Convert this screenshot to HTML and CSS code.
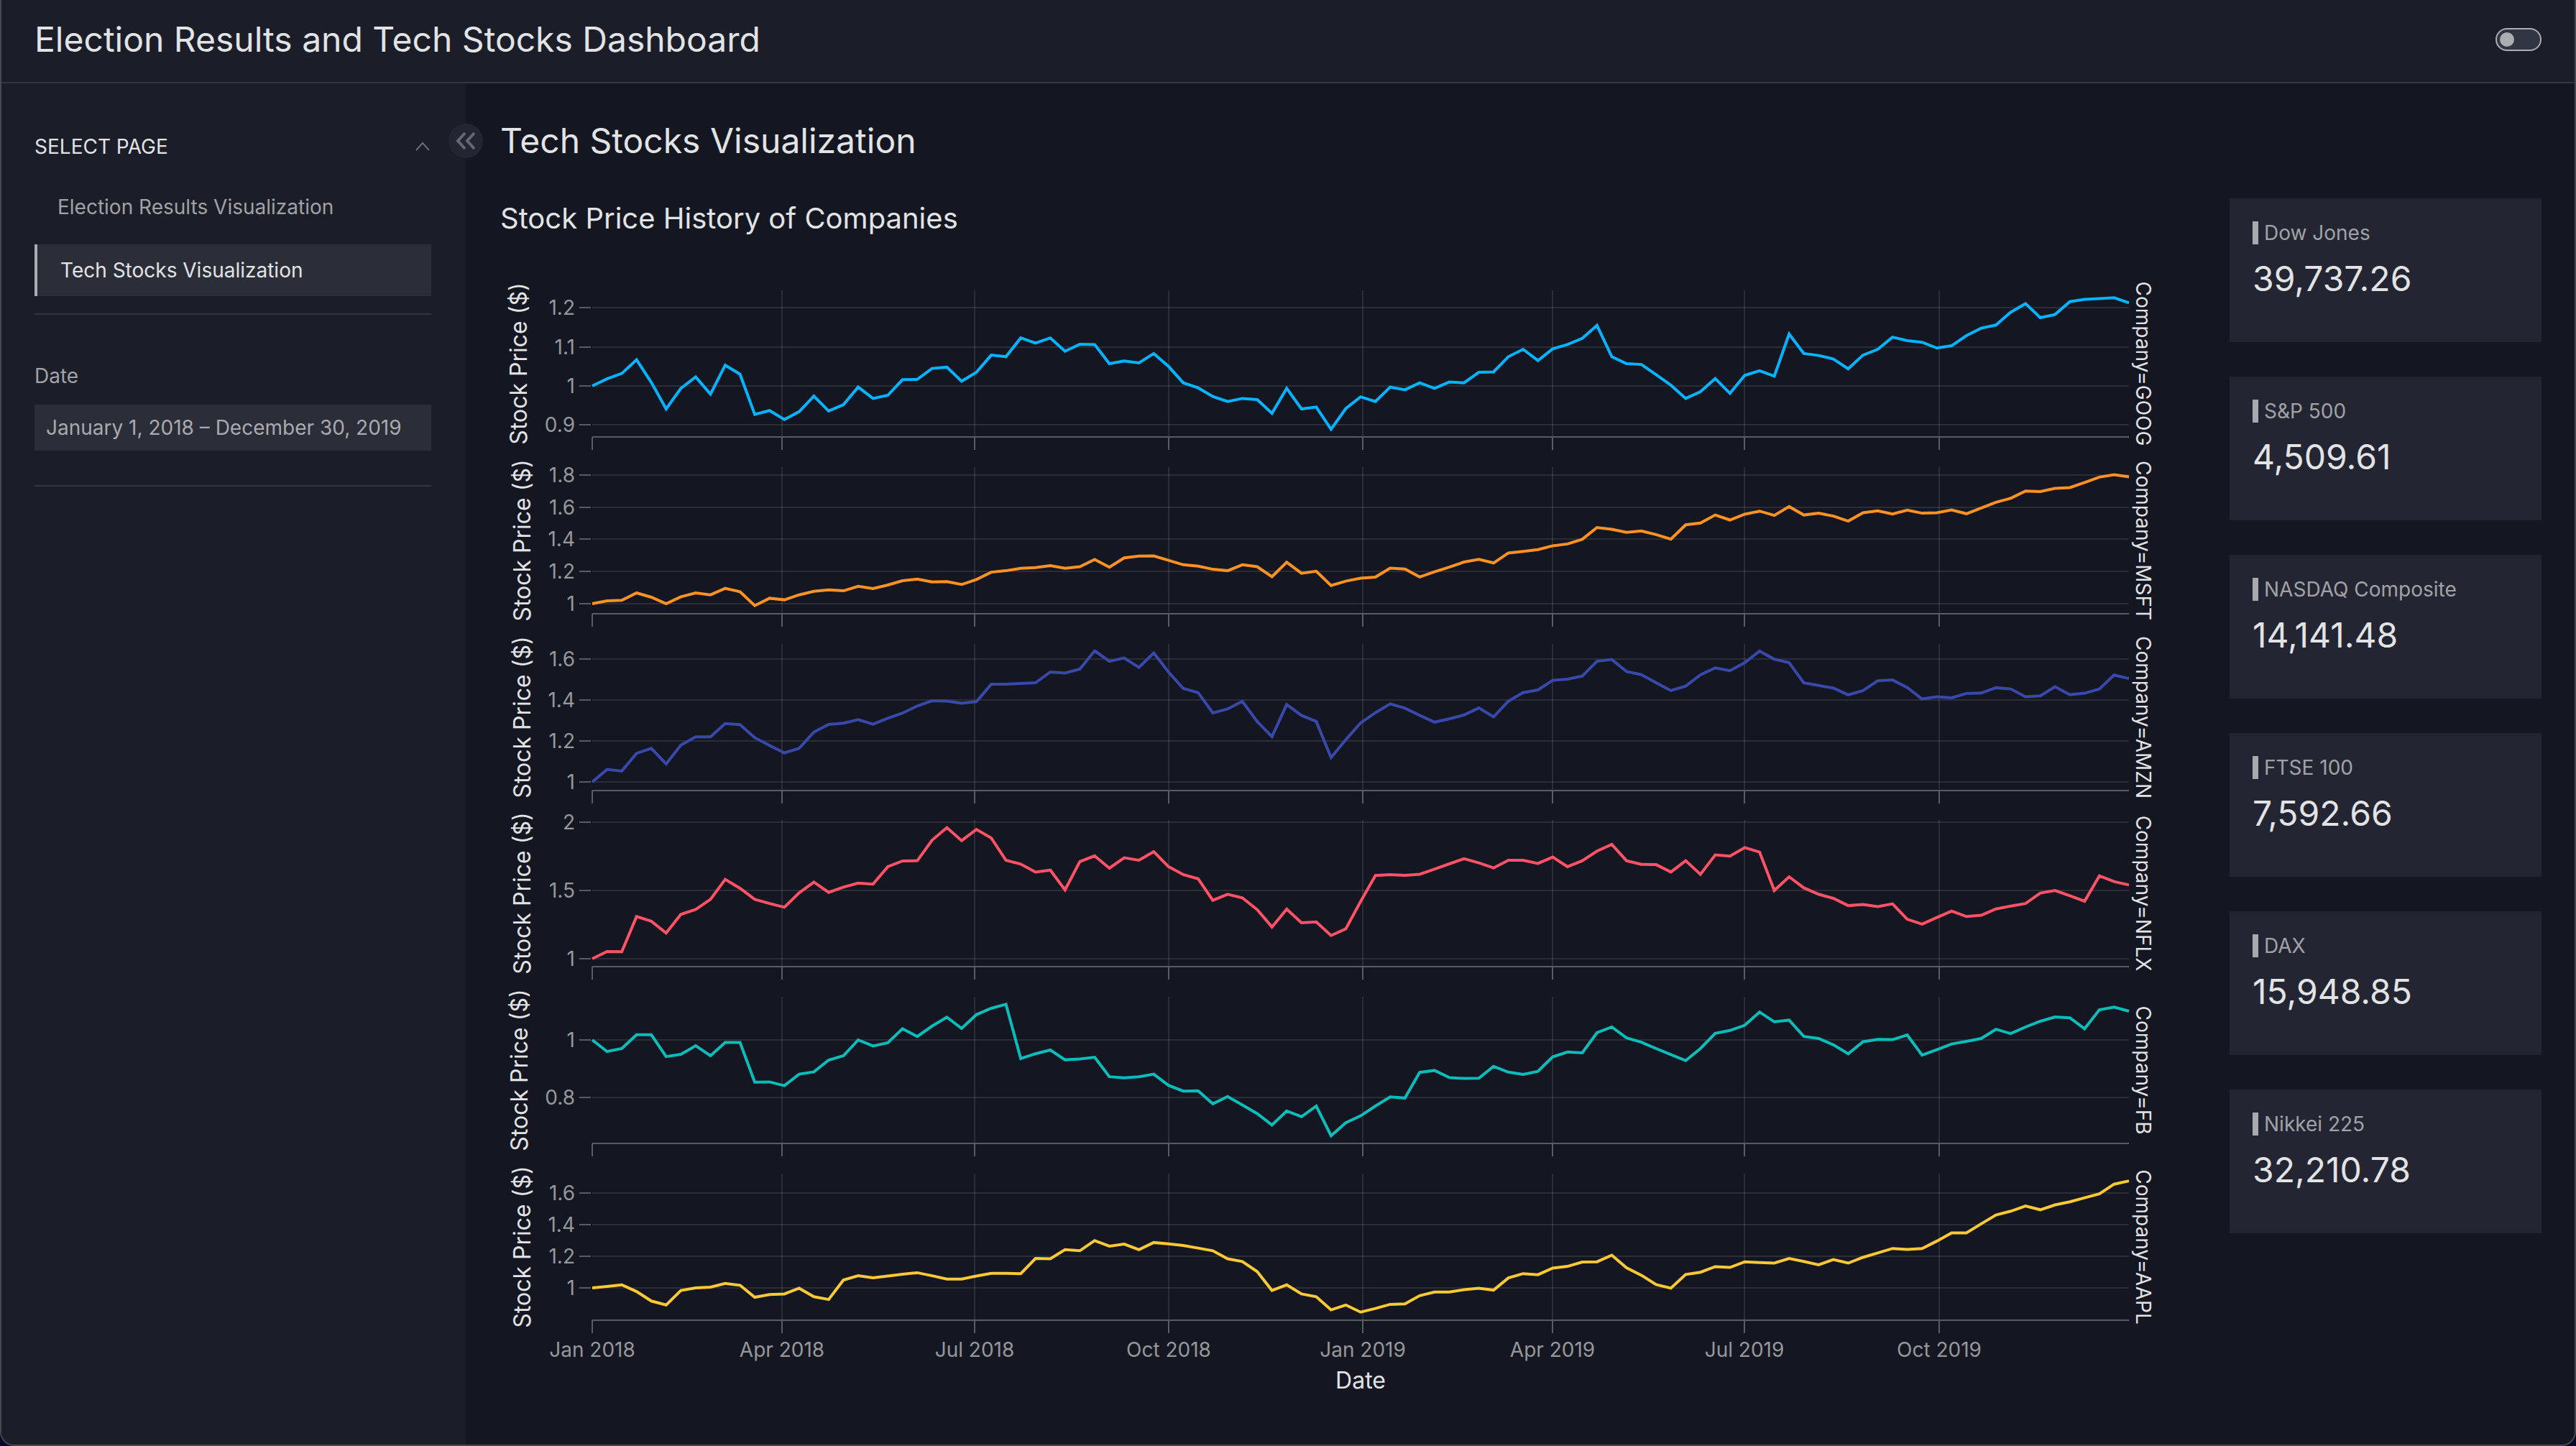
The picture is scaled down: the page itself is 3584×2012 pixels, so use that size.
FILE: index.html
```html
<!DOCTYPE html>
<html lang="en">
<head>
    <meta charset="UTF-8">
    <meta name="viewport" content="width=device-width, initial-scale=1.0">
    <title>Election Results and Tech Stocks Dashboard</title>
    <link rel="stylesheet" href="styles.css">
</head>
<body>
    <div class="page">
        <header class="header">
            <h1>Election Results and Tech Stocks Dashboard</h1>
            <input type="checkbox" class="theme-switch" role="switch" aria-label="Light theme">
        </header>

        <div class="content">
            <aside class="sidebar">
                <nav class="nav">
                    <button class="nav-toggle" type="button">
                        SELECT PAGE
                        <svg class="chevron" viewBox="0 0 20 12" aria-hidden="true"><path d="M1 11 L10 1 L19 11"/></svg>
                    </button>
                    <a class="nav-link" href="#election">Election Results Visualization</a>
                    <a class="nav-link active" href="#stocks">Tech Stocks Visualization</a>
                </nav>
                <div class="filter">
                    <label for="date-range">Date</label>
                    <input type="text" id="date-range" value="January 1, 2018 – December 30, 2019">
                </div>
                <button class="collapse" type="button" aria-label="Collapse sidebar">
                    <svg viewBox="0 0 48 48" aria-hidden="true"><path d="M23 13 L13 24 L23 35 M36 13 L26 24 L36 35"/></svg>
                </button>
            </aside>

            <main class="main">
                <h2>Tech Stocks Visualization</h2>
                <div class="board">
                    <section class="graph">
                        <h3>Stock Price History of Companies</h3>
                        <svg class="chart" id="chart" viewBox="0 0 2358 1584" role="img" aria-label="Stock price history"></svg>
                    </section>
                    <section class="cards">
                        <div class="card"><h4>Dow Jones</h4><p>39,737.26</p></div>
                        <div class="card"><h4>S&amp;P 500</h4><p>4,509.61</p></div>
                        <div class="card"><h4>NASDAQ Composite</h4><p>14,141.48</p></div>
                        <div class="card"><h4>FTSE 100</h4><p>7,592.66</p></div>
                        <div class="card"><h4>DAX</h4><p>15,948.85</p></div>
                        <div class="card"><h4>Nikkei 225</h4><p>32,210.78</p></div>
                    </section>
                </div>
            </main>
        </div>
    </div>

    <script src="chart.js"></script>
</body>
</html>
```
FILE: styles.css
```css
* {
    box-sizing: border-box;
}
body {
    margin: 0;
    background-color: #04072e;
    color: #e2e3e4;
    font-family: Inter, "Liberation Sans", sans-serif;
    font-size: 28px;
    line-height: 32px;
}
h1, h2, h3, h4, p {
    margin: 0;
    font-weight: 400;
}
button, input {
    font: inherit;
    color: inherit;
}
.page {
    display: flex;
    flex-direction: column;
    min-height: 100vh;
    background-color: #141721;
    border: 2px solid #48484f;
    border-top: none;
    border-radius: 0 0 20px 20px;
    overflow: hidden;
}

/* header */
.header {
    display: flex;
    justify-content: space-between;
    align-items: center;
    height: 116px;
    padding: 0 46px 4px;
    background-color: #1b1e29;
    border-bottom: 2px solid #323543;
}
h1, h2 {
    font-size: 48px;
    line-height: 56px;
}
.theme-switch {
    appearance: none;
    display: flex;
    align-items: center;
    width: 64px;
    height: 32px;
    margin: 0;
    padding: 0 4px;
    background-color: #323543;
    border: 2px solid #acadb1;
    border-radius: 16px;
    cursor: pointer;
}
.theme-switch::before {
    content: "";
    width: 20px;
    height: 20px;
    border-radius: 50%;
    background-color: #acadb1;
}
.theme-switch:checked {
    justify-content: flex-end;
}

/* sidebar */
.content {
    display: flex;
    flex: 1;
}
.sidebar {
    position: relative;
    width: 646px;
    flex-shrink: 0;
    padding: 64px 48px 0 46px;
    background-color: #1b1e29;
}
.nav {
    display: flex;
    flex-direction: column;
    gap: 16px;
    padding-bottom: 24px;
    border-bottom: 2px solid #323543;
}
.nav-toggle {
    display: flex;
    justify-content: space-between;
    align-items: center;
    height: 48px;
    margin-bottom: 8px;
    padding: 0 2px 0 0;
    border: none;
    background: none;
    cursor: pointer;
}
.chevron {
    width: 20px;
    height: 12px;
    fill: none;
    stroke: #6c6e75;
    stroke-width: 2;
}
.nav-link {
    padding: 20px 32px;
    color: #a1a2a6;
    text-decoration: none;
}
.nav-link.active {
    border-left: 4px solid #acadb1;
    background-color: #2b2e39;
    color: #e2e3e4;
}
.filter {
    display: flex;
    flex-direction: column;
    gap: 24px;
    padding: 69px 0 48px;
    border-bottom: 2px solid #323543;
}
.filter label {
    color: #a1a2a6;
}
.filter input {
    width: 100%;
    height: 64px;
    padding: 0 16px;
    border: none;
    background-color: #2b2d38;
    color: #a9aaae;
}
/* sits on the edge between the sidebar and the page */
.collapse {
    position: absolute;
    top: 56px;
    right: -24px;
    width: 48px;
    height: 48px;
    padding: 0;
    border: none;
    border-radius: 50%;
    background-color: #232632;
    cursor: pointer;
}
.collapse svg {
    display: block;
    fill: none;
    stroke: #66686f;
    stroke-width: 4;
}

/* page */
.main {
    flex: 1;
    min-width: 0;
    padding: 52px 46px 24px 48px;
}
.board {
    display: flex;
    gap: 48px;
    margin-top: 52px;
}
.graph {
    flex: 1;
    min-width: 0;
}
h3 {
    font-size: 40px;
    line-height: 56px;
}
.chart {
    display: block;
    width: 100%;
    margin-top: 40px;
}
.grid {
    stroke: rgba(255, 255, 255, 0.1);
    stroke-width: 2;
}
.axis {
    stroke: #5a5c64;
    stroke-width: 2;
}
.series {
    fill: none;
    stroke-width: 4;
}
.tick-label {
    fill: #96979b;
    font-size: 28px;
}
.axis-title {
    fill: #e2e3e4;
    font-size: 32px;
    text-anchor: middle;
}
.facet-label {
    fill: #e2e3e4;
    font-size: 28px;
    text-anchor: middle;
}
.end {
    text-anchor: end;
}
.middle {
    text-anchor: middle;
}

/* index cards */
.cards {
    display: flex;
    flex-direction: column;
    gap: 48px;
    width: 434px;
}
.card {
    height: 200px;
    padding: 32px;
    background-color: #232632;
}
.card h4 {
    padding-left: 8px;
    border-left: 8px solid #a9aab0;
    color: #a1a2a6;
    font-size: 28px;
}
.card p {
    margin-top: 20px;
    font-size: 48px;
    line-height: 56px;
}
```
FILE: chart.js
```js
const chart = document.getElementById("chart");
const left = 128;
const right = 2266;
const plotHeight = 204;
const dayWidth = (right - left) / 728;

// days since January 1, 2018
const months = [
    [0, "Jan 2018"], [90, "Apr 2018"], [181, "Jul 2018"], [273, "Oct 2018"],
    [365, "Jan 2019"], [455, "Apr 2019"], [546, "Jul 2019"], [638, "Oct 2019"]
];

// one: y of the price 1 in the plot, unit: height of a price step of 1, one price a week
const rows = [
    {
        name: "GOOG", color: "#00b4ff", top: 32, one: 133, unit: 543, title: 37, ticks: [0.9, 1, 1.1, 1.2],
        prices: [1, 1.018, 1.032, 1.067, 1.009, 0.941, 0.994, 1.023, 0.979, 1.053, 1.030, 0.927, 0.937, 0.914, 0.934, 0.974, 0.936, 0.952, 0.997, 0.968, 0.976, 1.016, 1.017, 1.045, 1.048, 1.012, 1.035, 1.079, 1.075, 1.123, 1.110, 1.123,
            1.089, 1.107, 1.106, 1.057, 1.064, 1.059, 1.083, 1.050, 1.008, 0.995, 0.973, 0.960, 0.968, 0.965, 0.930, 0.994, 0.941, 0.946, 0.889, 0.942, 0.972, 0.960, 0.997, 0.990, 1.008, 0.994, 1.010, 1.008, 1.035, 1.036, 1.075, 1.094, 1.065, 1.095, 1.106, 1.122, 1.155, 1.075, 1.057,
            1.055, 1.029, 1.002, 0.968, 0.985, 1.019, 0.981, 1.027, 1.039, 1.025, 1.133, 1.083, 1.078, 1.069, 1.044, 1.079, 1.094, 1.125, 1.116, 1.112, 1.097, 1.103, 1.129, 1.148, 1.156, 1.189, 1.211, 1.175, 1.183, 1.216, 1.222, 1.224, 1.226, 1.213]
    },
    {
        name: "MSFT", color: "#ff9222", top: 278, one: 190, unit: 224, title: 42, ticks: [1, 1.2, 1.4, 1.6, 1.8],
        prices: [1, 1.018, 1.021, 1.067, 1.040, 1.000, 1.043, 1.067, 1.055, 1.095, 1.074, 0.988, 1.034, 1.024, 1.055, 1.077, 1.086, 1.080, 1.108, 1.094, 1.116, 1.143, 1.153, 1.135, 1.137, 1.119, 1.150, 1.196, 1.205, 1.220, 1.224, 1.236,
            1.220, 1.230, 1.275, 1.227, 1.285, 1.296, 1.297, 1.269, 1.242, 1.233, 1.214, 1.205, 1.242, 1.230, 1.168, 1.257, 1.189, 1.202, 1.113, 1.140, 1.158, 1.165, 1.221, 1.215, 1.166, 1.198, 1.227, 1.259, 1.276, 1.253, 1.315, 1.325, 1.336, 1.360, 1.371, 1.400, 1.473, 1.462, 1.443,
            1.452, 1.429, 1.401, 1.490, 1.501, 1.551, 1.520, 1.556, 1.575, 1.548, 1.603, 1.551, 1.562, 1.544, 1.513, 1.565, 1.577, 1.557, 1.581, 1.562, 1.565, 1.582, 1.559, 1.594, 1.630, 1.655, 1.700, 1.697, 1.716, 1.721, 1.753, 1.786, 1.801, 1.788]
    },
    {
        name: "AMZN", color: "#3949ab", top: 524, one: 192, unit: 285, title: 42, ticks: [1, 1.2, 1.4, 1.6],
        prices: [1, 1.061, 1.053, 1.140, 1.164, 1.088, 1.180, 1.220, 1.220, 1.285, 1.280, 1.216, 1.178, 1.142, 1.164, 1.243, 1.281, 1.287, 1.304, 1.282, 1.311, 1.336, 1.371, 1.396, 1.395, 1.384, 1.392, 1.477, 1.477, 1.481, 1.484, 1.537,
            1.532, 1.551, 1.640, 1.589, 1.605, 1.559, 1.630, 1.537, 1.456, 1.436, 1.337, 1.356, 1.394, 1.295, 1.221, 1.378, 1.325, 1.295, 1.119, 1.206, 1.288, 1.338, 1.381, 1.360, 1.325, 1.292, 1.308, 1.327, 1.361, 1.318, 1.394, 1.436, 1.449, 1.496, 1.502, 1.517, 1.589, 1.598, 1.539,
            1.524, 1.484, 1.446, 1.468, 1.523, 1.557, 1.543, 1.582, 1.639, 1.599, 1.582, 1.484, 1.471, 1.458, 1.425, 1.446, 1.494, 1.498, 1.461, 1.405, 1.416, 1.411, 1.432, 1.434, 1.460, 1.454, 1.416, 1.420, 1.465, 1.426, 1.433, 1.454, 1.522, 1.505]
    },
    {
        name: "NFLX", color: "#ff5267", top: 769, one: 193, unit: 190, title: 42, ticks: [1, 1.5, 2],
        prices: [1, 1.053, 1.051, 1.309, 1.274, 1.188, 1.325, 1.361, 1.435, 1.581, 1.516, 1.435, 1.405, 1.377, 1.482, 1.561, 1.486, 1.525, 1.554, 1.546, 1.674, 1.716, 1.718, 1.868, 1.960, 1.865, 1.947, 1.884, 1.721, 1.693, 1.635, 1.649,
            1.504, 1.711, 1.753, 1.663, 1.739, 1.721, 1.784, 1.675, 1.616, 1.586, 1.428, 1.472, 1.446, 1.360, 1.232, 1.363, 1.263, 1.270, 1.170, 1.219, 1.419, 1.609, 1.616, 1.611, 1.619, 1.656, 1.695, 1.732, 1.702, 1.665, 1.721, 1.721, 1.698, 1.744, 1.674, 1.718, 1.788, 1.837, 1.718,
            1.691, 1.689, 1.635, 1.718, 1.618, 1.760, 1.751, 1.814, 1.781, 1.500, 1.600, 1.519, 1.472, 1.442, 1.389, 1.398, 1.382, 1.402, 1.289, 1.253, 1.302, 1.349, 1.309, 1.318, 1.365, 1.386, 1.405, 1.481, 1.500, 1.461, 1.421, 1.607, 1.565, 1.540]
    },
    {
        name: "FB", color: "#08bdba", top: 1015, one: 60, unit: 400, title: 38, ticks: [0.8, 1],
        prices: [1, 0.960, 0.970, 1.018, 1.018, 0.942, 0.950, 0.980, 0.945, 0.991, 0.991, 0.853, 0.854, 0.841, 0.881, 0.889, 0.930, 0.945, 1.000, 0.979, 0.990, 1.039, 1.012, 1.048, 1.079, 1.040, 1.088, 1.110, 1.124, 0.935, 0.952, 0.965,
            0.931, 0.934, 0.940, 0.872, 0.868, 0.872, 0.881, 0.842, 0.822, 0.823, 0.778, 0.803, 0.774, 0.744, 0.704, 0.753, 0.733, 0.770, 0.667, 0.712, 0.736, 0.770, 0.802, 0.798, 0.887, 0.894, 0.869, 0.866, 0.867, 0.908, 0.888, 0.880, 0.891, 0.941, 0.958, 0.955, 1.025, 1.045, 1.007,
            0.992, 0.970, 0.949, 0.928, 0.970, 1.023, 1.033, 1.051, 1.097, 1.063, 1.069, 1.012, 1.005, 0.983, 0.952, 0.994, 1.002, 1.001, 1.017, 0.947, 0.966, 0.986, 0.995, 1.005, 1.037, 1.022, 1.045, 1.065, 1.080, 1.077, 1.039, 1.105, 1.114, 1.100]
    },
    {
        name: "AAPL", color: "#fdc935", top: 1261, one: 159, unit: 220, title: 42, ticks: [1, 1.2, 1.4, 1.6],
        prices: [1, 1.009, 1.019, 0.977, 0.917, 0.892, 0.984, 1.000, 1.005, 1.028, 1.017, 0.941, 0.958, 0.962, 0.998, 0.944, 0.927, 1.050, 1.077, 1.064, 1.075, 1.087, 1.096, 1.077, 1.056, 1.056, 1.075, 1.092, 1.092, 1.090, 1.186, 1.184,
            1.242, 1.235, 1.299, 1.264, 1.277, 1.242, 1.287, 1.278, 1.268, 1.252, 1.235, 1.184, 1.167, 1.103, 0.984, 1.019, 0.962, 0.944, 0.861, 0.892, 0.847, 0.870, 0.896, 0.899, 0.951, 0.974, 0.974, 0.988, 0.998, 0.986, 1.063, 1.090, 1.083, 1.125, 1.136, 1.163, 1.165, 1.207, 1.127,
            1.080, 1.021, 0.998, 1.085, 1.099, 1.134, 1.129, 1.165, 1.160, 1.157, 1.186, 1.167, 1.146, 1.179, 1.157, 1.193, 1.221, 1.249, 1.243, 1.249, 1.296, 1.348, 1.348, 1.405, 1.461, 1.485, 1.518, 1.494, 1.525, 1.544, 1.570, 1.595, 1.656, 1.677]
    }
];

function line(cls, x1, y1, x2, y2) {
    return `<line class="${cls}" x1="${x1}" y1="${y1}" x2="${x2}" y2="${y2}"/>`;
}

let svg = "";
rows.forEach(row => {
    const bottom = row.top + plotHeight;
    const y = price => Math.round((row.top + row.one - (price - 1) * row.unit) * 10) / 10;

    row.ticks.forEach(tick => {
        const ty = Math.round(y(tick));
        svg += line("grid", left, ty, right, ty);
        svg += line("axis", left - 18, ty, left - 2, ty);
        svg += `<text class="tick-label end" x="104" y="${ty + 10}">${tick}</text>`;
    });
    months.forEach(([day]) => {
        const x = Math.round(left + day * dayWidth);
        if (day > 0) {
            svg += line("grid", x, row.top, x, bottom);
        }
        svg += line("axis", x, bottom, x, bottom + 18);
    });
    svg += line("axis", left, bottom, right, bottom);

    const points = row.prices.map((price, i) => `${(left + i * 7 * dayWidth).toFixed(1)},${y(price)}`);
    svg += `<polyline class="series" stroke="${row.color}" points="${points.join(" ")}"/>`;

    const middle = row.top + plotHeight / 2;
    svg += `<text class="axis-title" transform="translate(${row.title} ${middle}) rotate(-90)">Stock Price ($)</text>`;
    svg += `<text class="facet-label" transform="translate(2276 ${middle}) rotate(90)">Company=${row.name}</text>`;
});

months.forEach(([day, label]) => {
    svg += `<text class="tick-label middle" x="${Math.round(left + day * dayWidth)}" y="1516">${label}</text>`;
});
svg += `<text class="axis-title" x="${(left + right) / 2}" y="1560">Date</text>`;

chart.innerHTML = svg;
```
